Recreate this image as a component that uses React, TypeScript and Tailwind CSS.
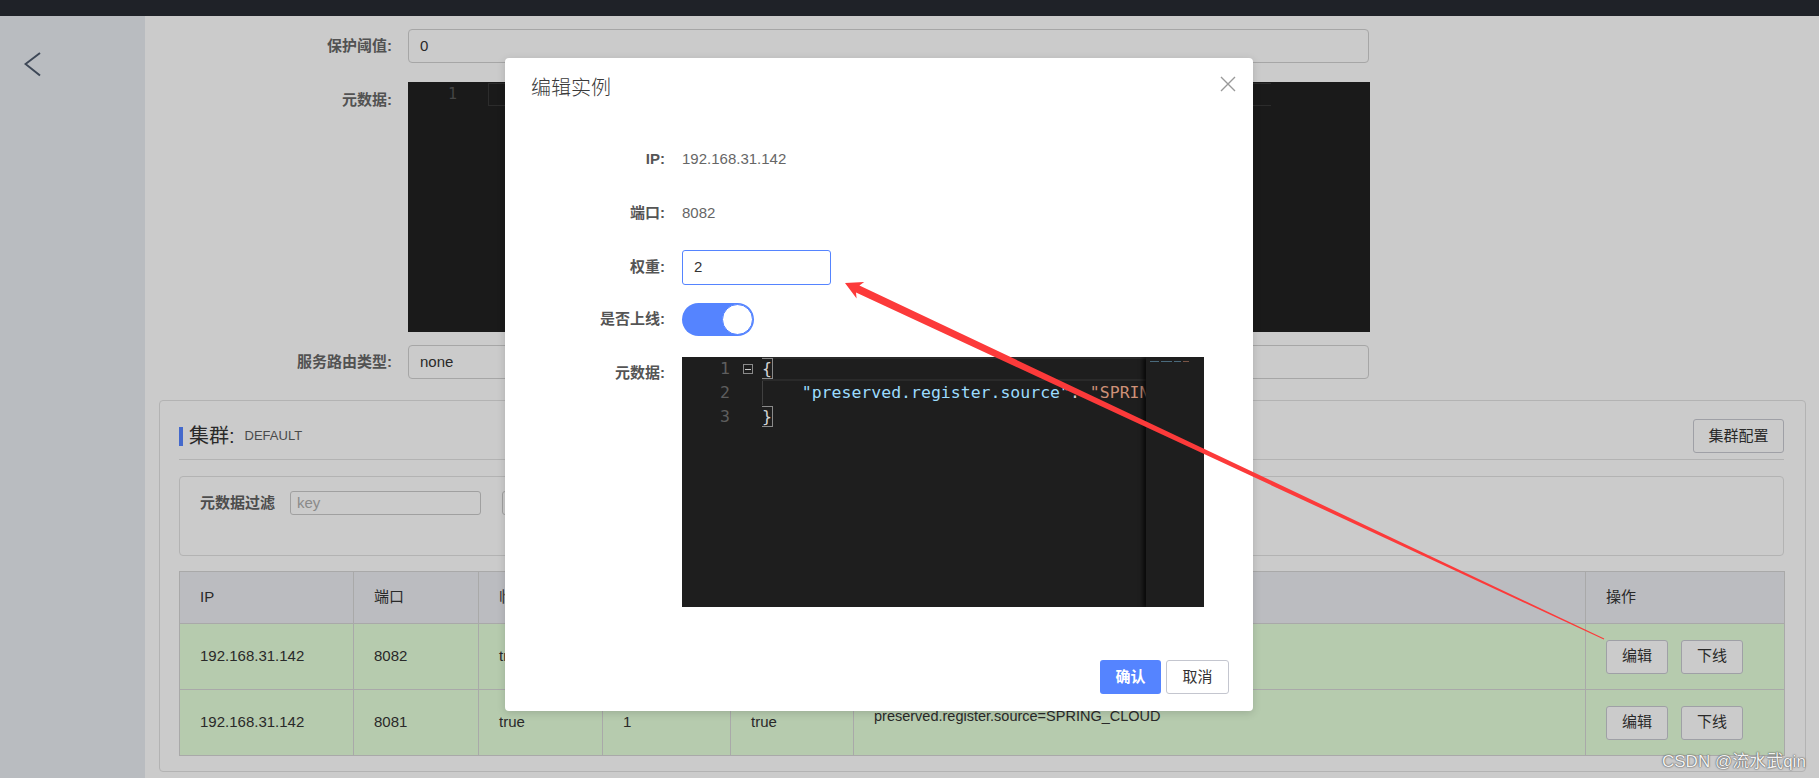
import React from "react";

const rows = [
  { ip: "192.168.31.142", port: "8082", ephemeral: "true", weight: "2", healthy: "true" },
  { ip: "192.168.31.142", port: "8081", ephemeral: "true", weight: "1", healthy: "true" },
];

const COLS = [174, 125, 124, 128, 123, 732, 199];
const HEADS = ["IP", "端口", "临时实例", "权重", "健康状态", "元数据", "操作"];

function FormRow({ label, children, top = false }: { label: string; children: React.ReactNode; top?: boolean }) {
  return (
    <div className={`flex ${top ? "items-start" : "items-center"}`}>
      <label className={`w-[247px] shrink-0 text-right font-bold text-[#525252] leading-5 ${top ? "pt-2" : ""}`}>{label}</label>
      <div className="ml-4">{children}</div>
    </div>
  );
}

function DimInput({ value }: { value: string }) {
  return (
    <div className="flex h-[34px] w-[961px] items-center rounded-[4px] border border-[#a6a6a6] px-[11px] text-[#292929]">
      {value}
    </div>
  );
}

function GrayButton({ children, className = "" }: { children: React.ReactNode; className?: string }) {
  return (
    <button className={`h-[34px] rounded-[3px] border border-[#9fa0a6] bg-[#cbcbcb] text-[15px] text-[#292929] ${className}`}>
      {children}
    </button>
  );
}

function Modal() {
  return (
    <div className="absolute left-[505px] top-[58px] h-[653px] w-[748px] rounded-[4px] bg-white shadow-[0_2px_8px_rgba(0,0,0,0.15)]">
      <div className="h-[42px] pl-[26px] pt-[18px] text-[20px] font-light leading-6 text-[#3a3a3a]">编辑实例</div>
      <button className="absolute left-[715px] top-[18px] h-4 w-4" aria-label="close">
        <svg width="16" height="16" viewBox="0 0 16 16">
          <path d="M1 1 L15 15 M15 1 L1 15" stroke="#999" strokeWidth="1.4" fill="none" />
        </svg>
      </button>
      <div className="pt-[42px]">
        <div className="mb-[19px] flex h-[35px] items-center">
          <span className="w-[160px] text-right font-bold text-[#555]">IP:</span>
          <span className="ml-[17px] text-[#666]">192.168.31.142</span>
        </div>
        <div className="mb-[19px] flex h-[35px] items-center">
          <span className="w-[160px] text-right font-bold text-[#555]">端口:</span>
          <span className="ml-[17px] text-[#666]">8082</span>
        </div>
        <div className="mb-[18px] flex h-[35px] items-center">
          <span className="w-[160px] text-right font-bold text-[#555]">权重:</span>
          <div className="ml-[17px] flex h-[35px] w-[149px] items-center rounded-[3px] border border-[#5584ff] pl-[11px] text-[#333]">2</div>
        </div>
        <div className="mb-[21px] flex h-[33px] items-center">
          <span className="w-[160px] text-right font-bold text-[#555]">是否上线:</span>
          <div className="ml-[17px] flex h-[33px] w-[72px] items-center justify-end rounded-full bg-[#5584ff] p-px">
            <div className="h-[31px] w-[31px] rounded-full border border-[#5584ff] bg-white" />
          </div>
        </div>
        <div className="flex items-start">
          <span className="w-[160px] pt-[6px] text-right font-bold leading-5 text-[#555]">元数据:</span>
          <div className="ml-[17px]">
            <CodeEditor />
          </div>
        </div>
      </div>
      <div className="mt-[53px] flex justify-end gap-[5px] pr-[24px]">
        <button className="h-[34px] w-[61px] rounded-[3px] bg-[#5584ff] text-[15px] font-bold text-white">确认</button>
        <button className="h-[34px] w-[63px] rounded-[3px] border border-[#c4c6cf] bg-white text-[15px] text-[#333]">取消</button>
      </div>
    </div>
  );
}

function CodeEditor() {
  const mono = "font-['DejaVu_Sans_Mono',monospace] text-[16.5px] leading-6";
  return (
    <div className={`relative flex h-[250px] w-[522px] overflow-hidden bg-[#1e1e1e] ${mono}`}>
      <div className="w-[80px] shrink-0">
        {[1, 2, 3].map((n) => (
          <div key={n} className="flex h-6 items-center">
            <span className="w-[48px] text-right text-[#5e5e5e]">{n}</span>
            {n === 1 && (
              <span className="ml-[13px] flex h-[10px] w-[10px] items-center justify-center border border-[#8a8a8a]">
                <span className="h-px w-[6px] bg-[#c8c8c8]" />
              </span>
            )}
          </div>
        ))}
      </div>
      <div className="relative w-[384px] overflow-hidden whitespace-pre text-[#d4d4d4]">
        <div className="absolute left-0 right-0 top-0 h-6 border-y-2 border-[#2a2a2a]" />
        <div className="absolute left-0 top-6 h-6 w-px bg-[#404040]" />
        <div className="relative h-6">
          <span className="outline outline-1 outline-[#8a8a8a]">{"{"}</span>
        </div>
        <div className="relative h-6">
          {"    "}
          <span className="text-[#9cdcfe]">"preserved.register.source"</span>
          <span>: </span>
          <span className="text-[#ce9178]">"SPRING_CLOUD"</span>
        </div>
        <div className="relative h-6">
          <span className="outline outline-1 outline-[#8a8a8a]">{"}"}</span>
        </div>
      </div>
      <div className="absolute right-0 top-0 h-full w-[58px] bg-[#1e1e1e] shadow-[-3px_0_4px_rgba(0,0,0,0.7)]">
        <div className="ml-[4px] mt-[4px] flex gap-[2px]">
          <span className="h-px w-[9px] bg-[#4a6a7c]" />
          <span className="h-px w-[11px] bg-[#4a6a7c]" />
          <span className="h-px w-[7px] bg-[#4a6a7c]" />
          <span className="h-px w-[6px] bg-[#7a5546]" />
        </div>
      </div>
    </div>
  );
}

function BgEditor() {
  return (
    <div className="relative h-[250px] w-[962px] bg-[#1a1a1a] font-['DejaVu_Sans_Mono',monospace] text-[15px]">
      <div className="flex h-6 items-center">
        <span className="w-[49px] text-right text-[#454545]">1</span>
        <div className="ml-[31px] h-[23px] w-[783px] border-y border-l border-[#2c2c2c]" />
      </div>
    </div>
  );
}

export default function App() {
  return (
    <div className="relative h-[778px] w-[1819px] overflow-hidden bg-[#cbcbcb] font-['Liberation_Sans','Noto_Sans_CJK_SC',sans-serif] text-[15px] text-[#292929]">
      <div className="h-4 bg-[#1f2228]" />
      <div className="flex h-[762px]">
        <aside className="w-[145px] shrink-0 bg-[#b9bcc0] pl-6 pt-9">
          <svg width="18" height="25" viewBox="0 0 18 25">
            <path d="M16 1 L1.5 12 L16 23.5" fill="none" stroke="#3d4756" strokeWidth="2" />
          </svg>
        </aside>
        <main className="min-w-0 flex-1 pt-[13px]">
          <div className="h-[34px]">
            <FormRow label="保护阈值:"><DimInput value="0" /></FormRow>
          </div>
          <div className="mt-[19px]">
            <FormRow label="元数据:" top><BgEditor /></FormRow>
          </div>
          <div className="mt-[13px] h-[34px]">
            <FormRow label="服务路由类型:"><DimInput value="none" /></FormRow>
          </div>

          <section className="ml-[14px] mr-[13px] mt-[21px] rounded-[4px] border border-[#b3b3b3] pb-[15px] pl-[19px] pr-[21px] pt-[18px]">
            <div className="flex h-[34px] items-center justify-between">
              <div className="flex items-center">
                <span className="h-[19px] w-1 bg-[#4469cc]" />
                <span className="ml-[6px] text-[20px] text-[#292929]">集群:</span>
                <span className="ml-[10px] text-[13px] text-[#4a4a4a]">DEFAULT</span>
              </div>
              <GrayButton className="w-[91px]">集群配置</GrayButton>
            </div>
            <div className="mt-[6px] border-t border-[#b3b3b3]" />

            <div className="mt-4 h-[80px] rounded-[4px] border border-[#b3b3b3] px-5 pt-[14px]">
              <div className="flex h-6 items-center">
                <span className="text-[15px] font-bold text-[#4d4d4d]">元数据过滤</span>
                <div className="ml-[15px] flex h-6 w-[191px] items-center rounded-[3px] border border-[#a0a0a0] pl-[6px] text-[#8a8a8a]">key</div>
                <div className="ml-[21px] h-6 w-[191px] rounded-[3px] border border-[#a0a0a0]" />
              </div>
            </div>

            <table className="mt-[15px] w-full table-fixed border-collapse border border-[#a9a9a9]">
              <colgroup>
                {COLS.map((w, i) => <col key={i} style={{ width: w }} />)}
              </colgroup>
              <thead>
                <tr className="h-[52px] bg-[#bbbcc0]">
                  {HEADS.map((h) => (
                    <th key={h} className="border-r border-[#a9a9a9] px-5 text-left font-normal text-[15px] text-[#292929]">{h}</th>
                  ))}
                </tr>
              </thead>
              <tbody>
                {rows.map((r) => (
                  <tr key={r.port} className="h-[66px] border-t border-[#a9a9a9] bg-[#b6cbae]">
                    <td className="border-r border-[#a9a9a9] px-5">{r.ip}</td>
                    <td className="border-r border-[#a9a9a9] px-5">{r.port}</td>
                    <td className="border-r border-[#a9a9a9] px-5">{r.ephemeral}</td>
                    <td className="border-r border-[#a9a9a9] px-5">{r.weight}</td>
                    <td className="border-r border-[#a9a9a9] px-5">{r.healthy}</td>
                    <td className="border-r border-[#a9a9a9] px-5">
                      <div className="pb-3 text-[14.5px]">preserved.register.source=SPRING_CLOUD</div>
                    </td>
                    <td className="px-5">
                      <div className="flex gap-[13px]">
                        <GrayButton className="w-[62px]">编辑</GrayButton>
                        <GrayButton className="w-[62px]">下线</GrayButton>
                      </div>
                    </td>
                  </tr>
                ))}
              </tbody>
            </table>
          </section>
        </main>
      </div>

      <Modal />

      <svg className="pointer-events-none absolute left-0 top-0" width="1819" height="778" viewBox="0 0 1819 778">
        <polygon
          points="845,283 864.2,282 859.4,285.4 1604.2,638.5 1603.8,639.5 856,292.6 856.6,298.4"
          fill="#fc3a3a"
        />
      </svg>

      <div className="absolute left-[1662px] top-[749px] text-[17px] text-[#f2f2f2] [text-shadow:0_0_2px_#555,0_0_1px_#444]">
        CSDN @流水武qin
      </div>
    </div>
  );
}
